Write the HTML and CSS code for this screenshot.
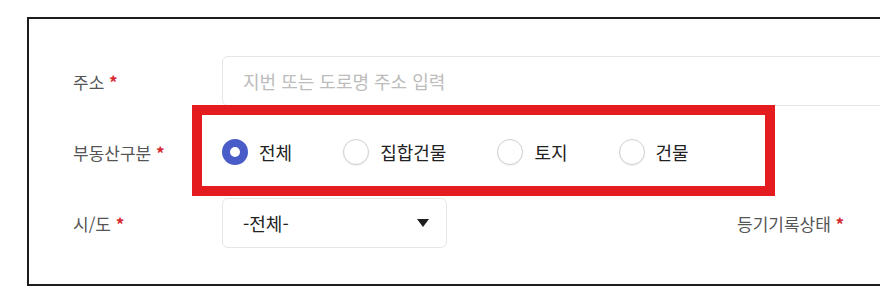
FILE: index.html
```html
<!DOCTYPE html>
<html lang="ko">
<head>
    <meta charset="UTF-8">
    <meta name="viewport" content="width=device-width, initial-scale=1.0">
    <title>부동산 검색</title>
    <link rel="stylesheet" href="styles.css">
</head>
<body>
    <div class="page">
        <form class="search-box">
            <div class="row">
                <label class="field-label">주소 <span class="req">*</span></label>
                <input type="text" class="text-input" placeholder="지번 또는 도로명 주소 입력">
            </div>

            <div class="row">
                <label class="field-label">부동산구분 <span class="req">*</span></label>
                <div class="radio-group">
                    <label class="radio"><input type="radio" name="kind" checked> 전체</label>
                    <label class="radio"><input type="radio" name="kind"> 집합건물</label>
                    <label class="radio"><input type="radio" name="kind"> 토지</label>
                    <label class="radio"><input type="radio" name="kind"> 건물</label>
                </div>
            </div>

            <div class="row split">
                <div class="field">
                    <label class="field-label">시/도 <span class="req">*</span></label>
                    <div class="select">
                        <span>-전체-</span>
                        <svg width="12" height="8" viewBox="0 0 12 8"><path d="M0 0 L12 0 L6 8 Z" fill="#1e1e1e"/></svg>
                    </div>
                </div>
                <div class="field">
                    <label class="field-label">등기기록상태 <span class="req">*</span></label>
                </div>
            </div>

            <div class="highlight"></div>
        </form>
    </div>
</body>
</html>
```

FILE: styles.css
```css
body { margin: 0; background: #fff; font-family: "Noto Sans CJK KR", "Noto Sans", sans-serif; overflow: hidden; }
.page { padding: 17px 0 0 27px; }
.search-box { position: relative; width: 1400px; border: 2px solid #1c1c1c; padding: 37px 44px 36px; display: flex; flex-direction: column; gap: 21px; }
.row { display: flex; align-items: center; height: 50px; }
.row.split { display: grid; grid-template-columns: 664px 662px; }
.field { display: flex; align-items: center; }
.field-label { width: 149px; flex-shrink: 0; font-size: 17px; color: #555; }
.req { color: #d7282f; font-weight: bold; }
.text-input { flex: 1; height: 50px; box-sizing: border-box; border: 1px solid #e6e6e6; border-radius: 6px; padding: 0 20px; font-size: 18px; font-family: inherit; color: #222; outline: none; }
.text-input::placeholder { color: #bcbcbc; }
.radio-group { display: flex; align-items: center; gap: 51px; }
.radio { display: flex; align-items: center; gap: 11px; font-size: 18px; color: #222; }
.radio input { appearance: none; margin: 0; width: 26px; height: 26px; border-radius: 50%; border: 1.5px solid #d0d0d0; background: #fff; box-sizing: border-box; box-shadow: 0 1px 1px rgba(0,0,0,0.06); }
.radio input:checked { border: 8.5px solid #4a5cc8; box-shadow: none; }
.select { width: 225px; height: 50px; box-sizing: border-box; border: 1px solid #e6e6e6; border-radius: 6px; padding: 0 17px 0 20px; display: flex; align-items: center; justify-content: space-between; font-size: 18px; color: #222; }
.highlight { position: absolute; left: 163px; top: 86px; width: 563px; height: 71px; border: 10px solid #e51c1f; }
```
